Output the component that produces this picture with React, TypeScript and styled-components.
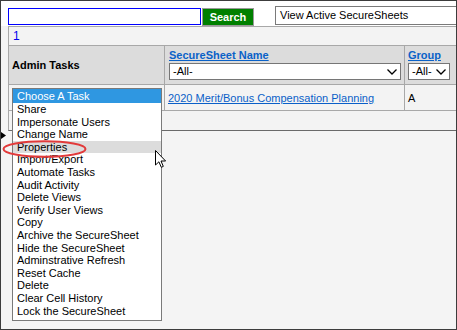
import React from "react";
import styled, { createGlobalStyle } from "styled-components";

const Global = createGlobalStyle`
  html, body { margin: 0; padding: 0; background: #fff; }
  * { box-sizing: border-box; }
`;

const Frame = styled.div`
  position: relative;
  width: 457px;
  height: 330px;
  border: 1px solid #3c3c3c;
  background: #f4f4f4;
  overflow: hidden;
  font-family: "Liberation Sans", Arial, sans-serif;
  font-size: 11px;
  color: #000;
`;

const TopBar = styled.div`
  display: flex;
  align-items: flex-start;
  height: 25px;
  padding: 5px 0 0 7px;
  background: #fff;
  & > * { flex: none; }
`;

const SearchInput = styled.div`
  width: 193px;
  height: 17px;
  margin-top: 2px;
  border: 1px solid #0000ff;
  background: #fff;
`;

const SearchButton = styled.div`
  width: 52px;
  height: 18px;
  margin: 2px 0 0 1px;
  border: 1px solid #9a9a9a;
  background: #008000;
  color: #fff;
  font-weight: bold;
  font-size: 11px;
  line-height: 16px;
  text-align: center;
`;

const ViewSelect = styled.div`
  width: 200px;
  height: 19px;
  margin-left: 21px;
  border: 1px solid #7a7a7a;
  background: #fff;
  padding-left: 4px;
  line-height: 17px;
  white-space: nowrap;
`;

const Panel = styled.div`
  width: 460px;
  margin-left: 7px;
  border-top: 1px solid #a8a8a8;
  border-left: 1px solid #a8a8a8;
  border-bottom: 1px solid #6a6a6a;
  background: #f3f3f3;
`;

const Pager = styled.div`
  height: 19px;
  padding-left: 4px;
  line-height: 18px;
  color: #0000ee;
  font-size: 12px;
  border-bottom: 1px solid #a8a8a8;
`;

const Row = styled.div<{ $h: number; $bg?: string; $line?: boolean }>`
  display: grid;
  grid-template-columns: 156px 240px 1fr;
  height: ${(p) => p.$h}px;
  background: ${(p) => p.$bg || "transparent"};
  border-bottom: ${(p) => (p.$line ? "1px solid #a8a8a8" : "none")};
`;

const Cell = styled.div<{ $pl: number; $center?: boolean; $noBorder?: boolean }>`
  position: relative;
  padding-left: ${(p) => p.$pl}px;
  border-right: ${(p) => (p.$noBorder ? "none" : "1px solid #a8a8a8")};
  display: flex;
  flex-direction: column;
  justify-content: ${(p) => (p.$center ? "center" : "flex-start")};
`;

const HeadText = styled.span`
  font-weight: bold;
`;

const HeadLink = styled.a`
  font-weight: bold;
  color: #0a62c8;
  text-decoration: underline;
  margin-top: 3px;
  line-height: 13px;
`;

const FilterSelect = styled.div<{ $w: number }>`
  display: flex;
  align-items: center;
  justify-content: space-between;
  width: ${(p) => p.$w}px;
  height: 17px;
  margin-top: 1px;
  padding: 0 3px 0 3px;
  border: 1px solid #767676;
  background: #fff;
  line-height: 15px;
`;

const DataLink = styled.a`
  color: #0a5fc8;
  text-decoration: underline;
`;

const ListBox = styled.div`
  position: absolute;
  left: 3px;
  top: 3px;
  width: 150px;
  border: 1px solid #7a7a7a;
  background: #fff;
  padding-bottom: 3px;
  z-index: 2;
`;

const Option = styled.div<{ $state?: "sel" | "hover" }>`
  height: ${(p) => (p.$state === "sel" ? 14 : 12.6)}px;
  line-height: ${(p) => (p.$state === "sel" ? 14 : 12.6)}px;
  padding-left: 4px;
  white-space: nowrap;
  font-size: 11px;
  background: ${(p) =>
    p.$state === "sel" ? "#2f97e1" : p.$state === "hover" ? "#dcdcdc" : "transparent"};
  color: ${(p) => (p.$state === "sel" ? "#fff" : "#000")};
`;

const Overlay = styled.svg<{ $x: number; $y: number }>`
  position: absolute;
  left: ${(p) => p.$x}px;
  top: ${(p) => p.$y}px;
  z-index: 3;
  overflow: visible;
`;

const Chevron = () => (
  <svg width="10" height="6" viewBox="0 0 10 6">
    <polyline points="0.5,0.5 5,5 9.5,0.5" fill="none" stroke="#000" strokeWidth="1.3" />
  </svg>
);

const tasks = [
  "Share",
  "Impersonate Users",
  "Change Name",
  "Properties",
  "Import/Export",
  "Automate Tasks",
  "Audit Activity",
  "Delete Views",
  "Verify User Views",
  "Copy",
  "Archive the SecureSheet",
  "Hide the SecureSheet",
  "Adminstrative Refresh",
  "Reset Cache",
  "Delete",
  "Clear Cell History",
  "Lock the SecureSheet",
];

export default function App() {
  return (
    <>
      <Global />
      <Frame>
        <TopBar>
          <SearchInput />
          <SearchButton>Search</SearchButton>
          <ViewSelect>View Active SecureSheets</ViewSelect>
        </TopBar>
        <Panel>
          <Pager>1</Pager>
          <Row $h={39} $bg="#dcdcdc" $line>
            <Cell $pl={3} $center>
              <HeadText>Admin Tasks</HeadText>
            </Cell>
            <Cell $pl={4}>
              <HeadLink>SecureSheet Name</HeadLink>
              <FilterSelect $w={232}>
                <span>-All-</span>
                <Chevron />
              </FilterSelect>
            </Cell>
            <Cell $pl={3} $noBorder>
              <HeadLink>Group</HeadLink>
              <FilterSelect $w={42}>
                <span>-All-</span>
                <Chevron />
              </FilterSelect>
            </Cell>
          </Row>
          <Row $h={26} $line>
            <Cell $pl={3}>
              <ListBox>
                <Option $state="sel">Choose A Task</Option>
                {tasks.map((t) => (
                  <Option key={t} $state={t === "Properties" ? "hover" : undefined}>
                    {t}
                  </Option>
                ))}
              </ListBox>
            </Cell>
            <Cell $pl={3} $center>
              <div>
                <DataLink>2020 Merit/Bonus Compensation Planning</DataLink>
              </div>
            </Cell>
            <Cell $pl={3} $center $noBorder>
              A
            </Cell>
          </Row>
          <Row $h={19} />
        </Panel>
        <Overlay $x={0} $y={130} width="6" height="10" viewBox="0 0 6 10">
          <polygon points="0,1 5,4.5 0,8" fill="#000" />
        </Overlay>
        <Overlay $x={1} $y={139} width="86" height="19" viewBox="0 0 86 19">
          <ellipse cx="42.5" cy="9" rx="41" ry="7.8" fill="none" stroke="#e23a3a" strokeWidth="2" />
        </Overlay>
        <Overlay $x={153} $y={148} width="13" height="20" viewBox="0 0 13 20">
          <path
            d="M1.5 1.5 L1.5 16 L4.9 12.8 L7.3 18.3 L9.3 17.4 L7 12 L11.6 12 Z"
            fill="#fff"
            stroke="#000"
            strokeWidth="1"
            strokeLinejoin="miter"
          />
        </Overlay>
      </Frame>
    </>
  );
}
